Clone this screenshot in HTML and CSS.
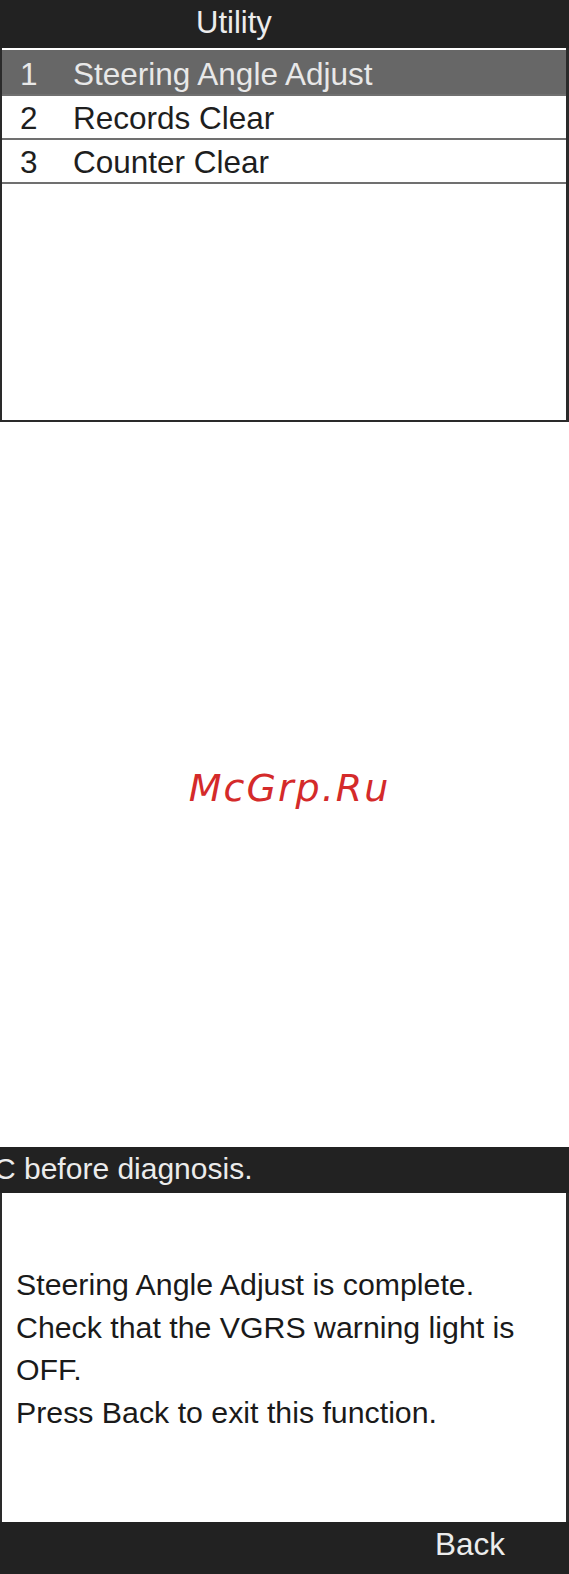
FILE: index.html
```html
<!DOCTYPE html>
<html lang="en">
<head>
<meta charset="utf-8">
<title>Utility</title>
<link rel="stylesheet" href="styles.css">
</head>
<body>
<div class="page">
  <section class="panel panel-top">
    <header class="title-bar">Utility</header>
    <div class="list">
      <div class="row row-selected"><span class="num">1</span><span class="label">Steering Angle Adjust</span></div>
      <div class="row"><span class="num">2</span><span class="label">Records Clear</span></div>
      <div class="row"><span class="num">3</span><span class="label">Counter Clear</span></div>
    </div>
  </section>

  <div class="watermark"><span class="mark">McGrp.Ru</span></div>

  <section class="panel panel-bottom">
    <header class="msg-bar"><span class="scroll-text">C before diagnosis.</span></header>
    <div class="msg-body">
      <p class="msg">Steering Angle Adjust is complete.<br>Check that the VGRS warning light is<br>OFF.<br>Press Back to exit this function.</p>
    </div>
    <footer class="foot-bar"><span class="btn">Back</span></footer>
  </section>
</div>
</body>
</html>
```

FILE: styles.css
```css
html, body {
  margin: 0;
  padding: 0;
  background: #ffffff;
}

.page {
  width: 569px;
  height: 1574px;
  display: flex;
  flex-direction: column;
  font-family: "Liberation Sans", Arial, sans-serif;
  font-size: 30px;
  color: #1c1c1c;
}

.panel {
  display: flex;
  flex-direction: column;
}

.title-bar {
  height: 48px;
  box-sizing: border-box;
  background: #222222;
  color: #ececec;
  font-size: 31px;
  line-height: 46px;
  padding-left: 196px;
  padding-bottom: 2px;
}

.list {
  height: 374px;
  box-sizing: border-box;
  padding-top: 2px;
  border-left: 2px solid #2a2a2a;
  border-right: 3px solid #2a2a2a;
  border-bottom: 2px solid #2a2a2a;
  background: #ffffff;
  display: flex;
  flex-direction: column;
  font-size: 31.5px;
}

.row {
  height: 44px;
  box-sizing: border-box;
  display: flex;
  padding-left: 18px;
  padding-top: 2px;
  line-height: 40px;
  border-bottom: 2px solid #707070;
  color: #1e1e1e;
}

.row-selected {
  height: 46px;
  padding-top: 4px;
  background: #676767;
  color: #e8e8e8;
}

.num {
  width: 53px;
  flex: none;
}

.watermark {
  height: 725px;
  display: flex;
  justify-content: center;
  align-items: flex-start;
  padding-left: 10px;
  box-sizing: border-box;
}

.mark {
  margin-top: 344px;
  font-family: "DejaVu Sans", Verdana, sans-serif;
  font-style: oblique;
  font-size: 38px;
  letter-spacing: 2px;
  color: #d42a2a;
  line-height: 44px;
}

.msg-bar {
  height: 46px;
  box-sizing: border-box;
  background: #222222;
  color: #ececec;
  line-height: 44px;
  padding-bottom: 2px;
  overflow: hidden;
  white-space: nowrap;
}

.scroll-text {
  display: block;
  margin-left: -6px;
}

.msg-body {
  height: 329px;
  box-sizing: border-box;
  border-left: 2px solid #2a2a2a;
  border-right: 3px solid #2a2a2a;
  padding: 71px 0 0 14px;
  background: #ffffff;
}

.msg {
  margin: 0;
  font-size: 30.3px;
  line-height: 42.5px;
  color: #1a1a1a;
}

.foot-bar {
  height: 52px;
  box-sizing: border-box;
  background: #222222;
  color: #ececec;
  font-size: 31.5px;
  line-height: 44px;
  padding-bottom: 8px;
  padding-left: 435px;
}
```
